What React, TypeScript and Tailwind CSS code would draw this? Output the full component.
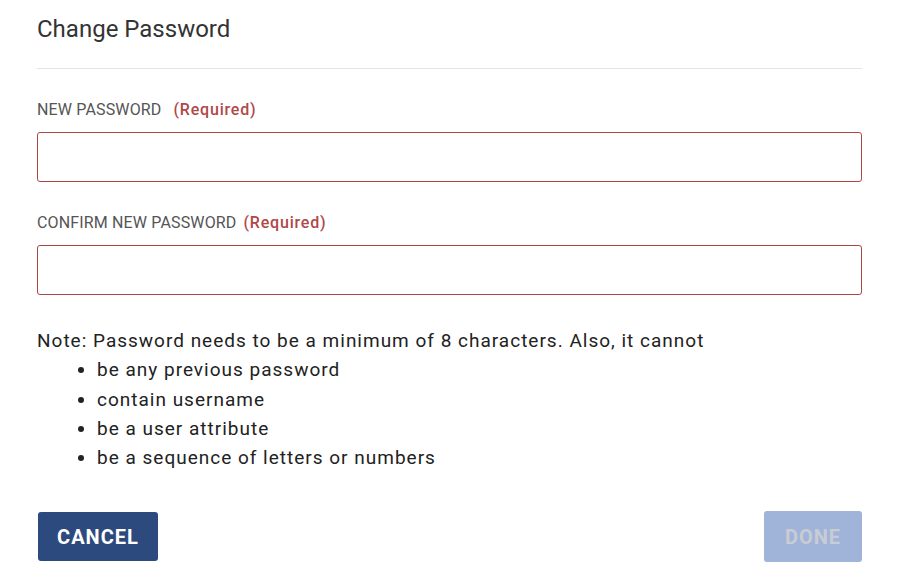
export default function App() {
  const rules = [
    "be any previous password",
    "contain username",
    "be a user attribute",
    "be a sequence of letters or numbers",
  ];

  return (
    <div
      className="w-[898px] h-[572px] bg-white flex flex-col pl-[37px] pr-[36px]"
      style={{ fontFamily: "Roboto, 'Liberation Sans', sans-serif" }}
    >
      {/* Header */}
      <h1 className="pt-[14px] pb-[24px] text-[24px] leading-[30px] text-[#333] border-b border-[#e3e3e3]">
        Change Password
      </h1>

      {/* New password */}
      <label className="mt-[31px] text-[16px] leading-[20px] tracking-[0.15px] text-[#555] uppercase">
        New Password
        <span className="ml-[12px] font-medium tracking-[0.8px] text-[#b04848] normal-case">(Required)</span>
      </label>
      <input
        type="password"
        className="mt-[12px] h-[50px] rounded-[3px] border border-[#b04545] outline-none px-3"
      />

      {/* Confirm password */}
      <label className="mt-[31px] text-[16px] leading-[20px] tracking-[0.15px] text-[#555] uppercase">
        Confirm New Password
        <span className="ml-[7px] font-medium tracking-[0.8px] text-[#b04848] normal-case">(Required)</span>
      </label>
      <input
        type="password"
        className="mt-[12px] h-[50px] rounded-[3px] border border-[#b04545] outline-none px-3"
      />

      {/* Note */}
      <div className="mt-[31px] text-[19px] leading-[29.3px] tracking-[1px] text-[#222]">
        <p>Note: Password needs to be a minimum of 8 characters. Also, it cannot</p>
        <ul className="list-disc pl-[60px]">
          {rules.map((r) => (
            <li key={r}>{r}</li>
          ))}
        </ul>
      </div>

      {/* Actions */}
      <div className="mt-auto mb-[10px] flex items-center justify-between">
        <button className="ml-px w-[120px] h-[49px] rounded-[3px] bg-[#2c4a7e] text-white text-[20px] font-bold tracking-[1px]">
          CANCEL
        </button>
        <button
          disabled
          className="w-[98px] h-[51px] rounded-[3px] bg-[#a0b4da] text-[#c9ccd3] text-[20px] font-bold tracking-[1px]"
        >
          DONE
        </button>
      </div>
    </div>
  );
}
